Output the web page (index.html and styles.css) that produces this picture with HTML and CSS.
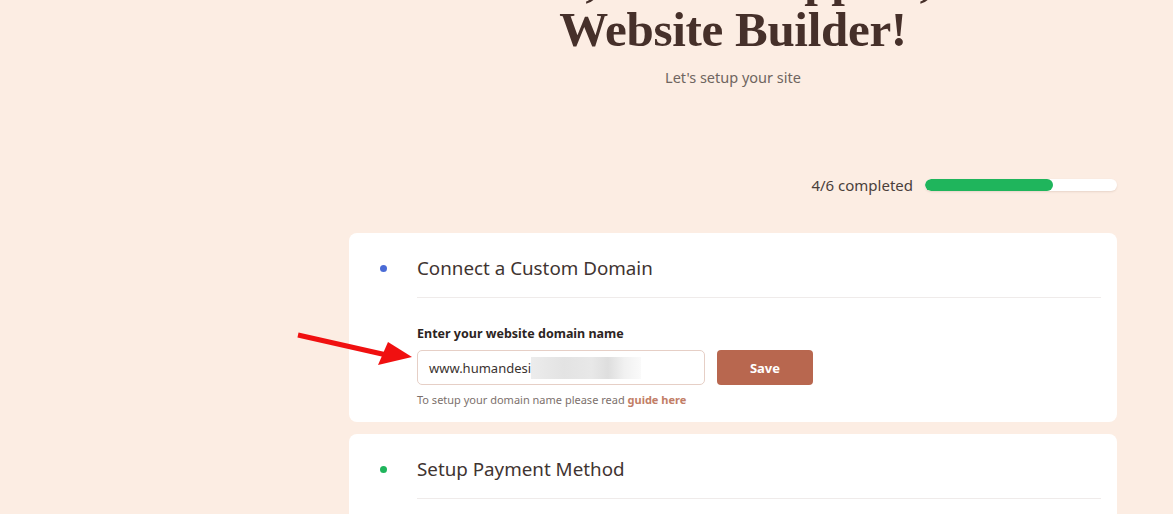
FILE: index.html
```html
<!DOCTYPE html>
<html lang="en">

<head>
    <meta charset="UTF-8">
    <meta name="viewport" content="width=device-width, initial-scale=1.0">
    <title>Website Builder</title>
    <link rel="stylesheet" href="styles.css">
</head>

<body>
    <div class="page">
        <div class="sidebar"></div>

        <div class="main">
            <div class="hero">
                <h1>Hi, Meet Shoppers,<br>Website Builder!</h1>
                <p class="subtitle">Let's setup your site</p>
            </div>

            <div class="progress">
                <span>4/6 completed</span>
                <div class="track">
                    <div class="fill" style="width: 66.6%"></div>
                </div>
            </div>

            <div class="card">
                <div class="dot blue"></div>
                <div class="card-title">Connect a Custom Domain</div>
                <div class="card-body">
                    <label class="label">Enter your website domain name</label>
                    <div class="form-row">
                        <div class="input">www.humandesi<span class="blur"></span></div>
                        <button class="save">Save</button>
                    </div>
                    <p class="help">To setup your domain name please read <a href="#">guide here</a></p>
                </div>
            </div>

            <div class="card">
                <div class="dot green"></div>
                <div class="card-title">Setup Payment Method</div>
                <div class="card-body">
                    <label class="label">&nbsp;</label>
                </div>
            </div>
        </div>
    </div>

    <!-- annotation arrow -->
    <svg class="arrow" width="130" height="40" viewBox="0 0 130 40">
        <line x1="2" y1="3" x2="95" y2="24" stroke="#f01010" stroke-width="5" />
        <polygon points="92,10 116,25 82,33" fill="#f01010" />
    </svg>
</body>

</html>
```

FILE: styles.css
```css
body {
    margin: 0;
    background: #fcede3;
    font-family: "Noto Sans", "Open Sans", sans-serif;
    color: #3f3431;
    overflow: hidden;
}

.page {
    display: flex;
    height: 514px;
}

.sidebar {
    width: 293px;
    flex-shrink: 0;
}

.main {
    flex: 1;
    padding: 0 56px;
}

.hero {
    text-align: center;
}

h1 {
    margin: -45px 0 0;
    font-family: "Liberation Serif", "DejaVu Serif", serif;
    font-weight: bold;
    font-size: 49px;
    line-height: 50px;
    color: #46302a;
    letter-spacing: -0.3px;
}

.subtitle {
    margin: 12px 0 0;
    font-size: 14.5px;
    line-height: 20px;
    color: #6f6560;
}

.progress {
    display: flex;
    justify-content: flex-end;
    align-items: center;
    gap: 12px;
    margin-top: 88px;
    height: 20px;
    font-size: 15px;
    color: #4a3f3b;
}

.track {
    width: 192px;
    height: 12px;
    border-radius: 6px;
    background: #fff;
    box-shadow: 0 1px 2px rgba(120, 80, 60, 0.15);
    overflow: hidden;
}

.fill {
    height: 100%;
    background: #1fb55c;
    border-radius: 6px;
}

.card {
    display: grid;
    grid-template-columns: 68px 1fr;
    padding-right: 16px;
    background: #fff;
    border-radius: 8px;
    margin-top: 38px;
}

.card + .card {
    margin-top: 12px;
}

.dot {
    width: 7px;
    height: 7px;
    border-radius: 50%;
    margin: 32px 0 0 31px;
}

.blue {
    background: #4a6bd6;
}

.green {
    background: #1fb55c;
}

.card-title {
    padding-top: 22px;
    height: 42px;
    font-size: 18.8px;
    line-height: 26px;
    border-bottom: 1px solid #efebea;
    color: #3f3431;
}

.card-body {
    grid-column: 2;
    padding: 27px 0 15px;
}

.label {
    display: block;
    font-size: 12.5px;
    font-weight: bold;
    line-height: 18px;
    color: #2c2422;
}

.form-row {
    display: flex;
    gap: 12px;
    margin-top: 7px;
}

.input {
    box-sizing: border-box;
    width: 288px;
    height: 35px;
    padding: 0 11px;
    border: 1px solid #e6cfc6;
    border-radius: 5px;
    display: flex;
    align-items: center;
    font-size: 13px;
    color: #3a3230;
}

.blur {
    display: inline-block;
    width: 110px;
    height: 22px;
    background: linear-gradient(90deg, #ececec 0%, #e3e3e3 30%, #e8e8e8 55%, #dedede 70%, #f1f1f1 85%, #fafafa 100%);
}

.save {
    width: 96px;
    height: 35px;
    border: none;
    border-radius: 4px;
    background: #b8674f;
    color: #fff;
    font-family: inherit;
    font-weight: bold;
    font-size: 13px;
}

.help {
    margin: 7px 0 0;
    font-size: 11px;
    line-height: 15px;
    color: #7c706c;
}

.help a {
    color: #c27e66;
    font-weight: bold;
    text-decoration: none;
}

.arrow {
    position: absolute;
    left: 296px;
    top: 332px;
}
```
